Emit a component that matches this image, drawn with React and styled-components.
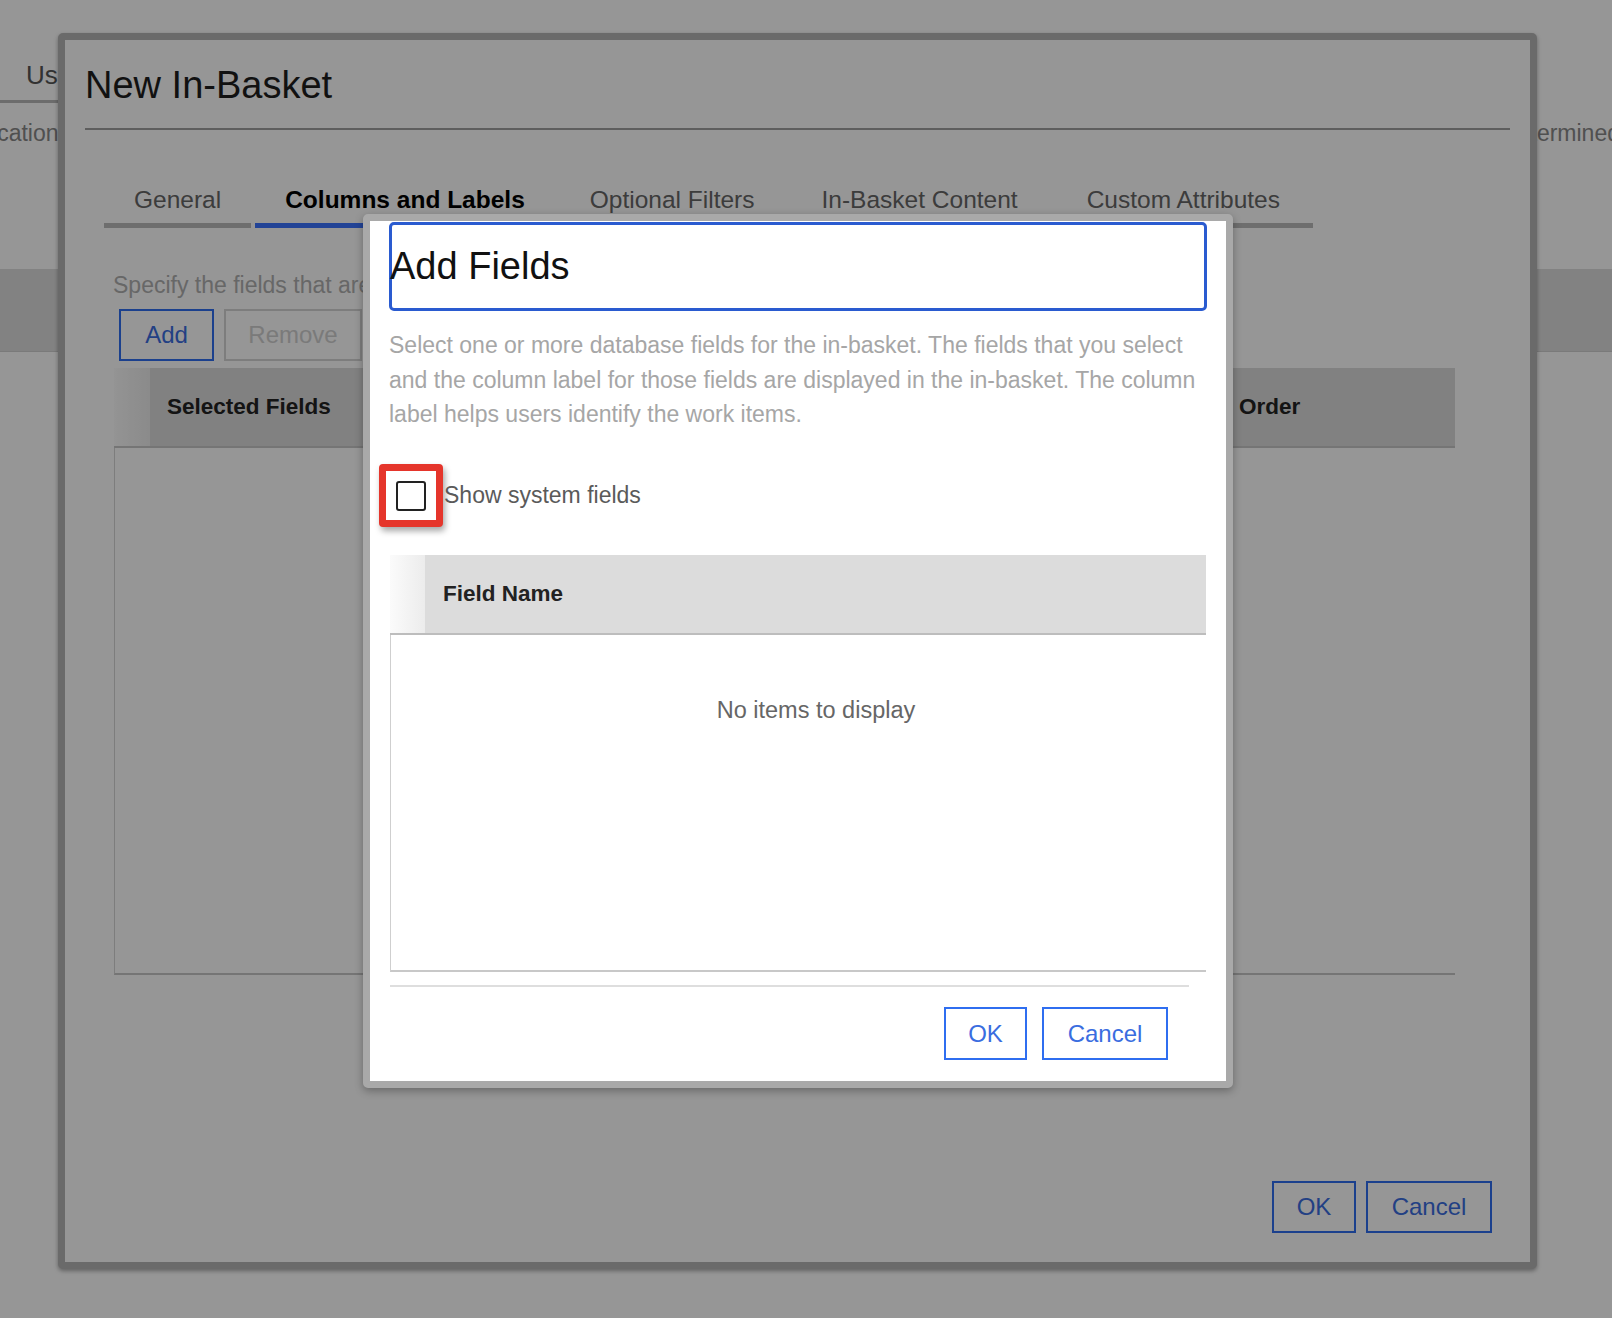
import React from 'react';
import styled, { createGlobalStyle } from 'styled-components';

const GlobalStyle = createGlobalStyle`
  html, body {
    margin: 0;
    padding: 0;
  }
  body {
    font-family: "Liberation Sans", Arial, Helvetica, sans-serif;
    background: #fff;
  }
  * {
    box-sizing: border-box;
  }
`;

const Page = styled.div`
  position: relative;
  width: 1612px;
  height: 1318px;
  overflow: hidden;
  background: #fff;
`;

/* page behind the dialogs */

const Backdrop = styled.div`
  display: flex;
  flex-direction: column;
`;

const BgTabRow = styled.div`
  height: 103px;
  display: flex;
  align-items: flex-end;
`;

const BgTab = styled.span`
  padding: 0 80px 9px 26px;
  border-bottom: 3px solid #b8b8b8;
  font-size: 26px;
  line-height: 32px;
  color: #555;
`;

const BgInfoRow = styled.div`
  height: 166px;
  padding-top: 15px;
  display: flex;
  justify-content: space-between;
  font-size: 23px;
  line-height: 30px;
  color: #888;
  white-space: nowrap;
`;

const BgInfoLeft = styled.span`
  margin-left: -54px;
`;

const BgInfoRight = styled.span`
  margin-right: -8px;
`;

const BgBand = styled.div`
  height: 83px;
  background: #dedede;
  border-bottom: 1px solid #cfcfcf;
`;

/* shared button */

const Button = styled.button`
  width: ${p => p.$w}px;
  height: ${p => p.$h || 52}px;
  padding: 0;
  background: #fff;
  border: 2px solid ${p => (p.$tone === 'muted' ? '#d4d4d4' : '#2f6ef0')};
  color: ${p => (p.$tone === 'muted' ? '#d0d0d0' : '#3a6de0')};
  font-family: inherit;
  font-size: 24px;
  cursor: pointer;
`;

/* New In-Basket dialog */

const OuterDialog = styled.div`
  position: absolute;
  left: 58px;
  top: 33px;
  width: 1479px;
  height: 1236px;
  border: 7px solid #b5b5b5;
  border-radius: 5px;
  background: #fff;
  box-shadow: 0 2px 4px rgba(0, 0, 0, 0.35);
  display: flex;
  flex-direction: column;
`;

const DialogHeader = styled.div`
  margin: 0 20px;
  padding: 22px 0 20px;
  border-bottom: 2px solid #a0a0a0;
`;

const DialogTitle = styled.h1`
  margin: 0;
  font-size: 38px;
  line-height: 46px;
  font-weight: normal;
  color: #1e1e1e;
`;

const TabBar = styled.div`
  display: flex;
  gap: 4px;
  margin: 56px 0 0 39px;
`;

const Tab = styled.div`
  padding: 0 ${p => p.$pad || 31}px 9px;
  font-size: 24.5px;
  line-height: 28px;
  white-space: nowrap;
  color: ${p => (p.$active ? '#000' : '#666')};
  font-weight: ${p => (p.$active ? 'bold' : 'normal')};
  border-bottom: 5px solid ${p => (p.$active ? '#3a72ff' : '#bbbbbb')};
`;

const Intro = styled.p`
  margin: 40px 0 0 48px;
  font-size: 23px;
  line-height: 34px;
  color: #b0b0b0;
  white-space: nowrap;
`;

const ButtonRow = styled.div`
  display: flex;
  gap: 10px;
  margin: 7px 0 0 54px;
`;

const Grid = styled.div`
  margin: 7px 0 0 49px;
  width: 1341px;
`;

const GridHead = styled.div`
  display: flex;
  height: 80px;
  background: #dcdcdc;
  border-bottom: 2px solid #c8c8c8;
`;

const HeadSpacer = styled.div`
  width: ${p => p.$w}px;
  background: linear-gradient(to right, #fbfbfb, #ececec);
`;

const HeadCell = styled.div`
  flex: ${p => (p.$w ? 'none' : 1)};
  width: ${p => (p.$w ? `${p.$w}px` : 'auto')};
  padding-left: ${p => p.$pad || 17}px;
  display: flex;
  align-items: center;
  font-size: 22.5px;
  font-weight: bold;
  color: #222;
`;

const GridBody = styled.div`
  height: 527px;
  border-left: 1px solid #d4d4d4;
  border-bottom: 2px solid #c8c8c8;
`;

const OuterFooter = styled.div`
  margin-top: auto;
  display: flex;
  justify-content: flex-end;
  gap: 10px;
  padding: 0 38px 29px 0;
`;

const Overlay = styled.div`
  position: absolute;
  inset: 0;
  background: rgba(0, 0, 0, 0.41);
`;

/* Add Fields dialog */

const InnerDialog = styled.div`
  position: absolute;
  left: 363px;
  top: 214px;
  width: 870px;
  height: 874px;
  border: 7px solid #a9a9a9;
  border-radius: 5px;
  background: #fff;
  box-shadow: 0 3px 8px rgba(0, 0, 0, 0.3);
  padding: 0 19px;
  display: flex;
  flex-direction: column;
`;

const TitleBox = styled.h2`
  margin: 1px 0 0;
  height: 89px;
  border: 3px solid #2a5bd0;
  border-radius: 5px;
  font-size: 38px;
  line-height: 83px;
  font-weight: normal;
  color: #111;
  text-indent: -2px;
`;

const Description = styled.p`
  margin: 17px 0 0;
  font-size: 23px;
  line-height: 34.5px;
  color: #a6a6a6;
`;

const CheckRow = styled.label`
  display: flex;
  align-items: center;
  margin: 32.5px 0 0 -10px;
`;

const Highlight = styled.span`
  width: 64px;
  height: 63px;
  border: 7px solid #e5352b;
  border-radius: 4px;
  background: #fff;
  box-shadow: 2px 4px 6px rgba(0, 0, 0, 0.35);
  display: flex;
  align-items: center;
  justify-content: center;
`;

const CheckBox = styled.span`
  width: 30px;
  height: 30px;
  border: 2px solid #222;
  border-radius: 3px;
  background: #fff;
`;

const CheckLabel = styled.span`
  margin-left: 1px;
  font-size: 23px;
  color: #5a5a5a;
`;

const FieldGrid = styled.div`
  margin: 28px 1px 0;
`;

const FieldHead = styled.div`
  display: flex;
  height: 80px;
  background: #dcdcdc;
  border-bottom: 2px solid #bdbdbd;
`;

const FieldBody = styled.div`
  height: 337px;
  border-left: 1px solid #cfcfcf;
  border-bottom: 2px solid #c8c8c8;
  padding: 60px 0 0 35px;
  display: flex;
  justify-content: center;
`;

const EmptyText = styled.span`
  font-size: 23.5px;
  line-height: 30px;
  color: #666;
`;

const Divider = styled.div`
  height: 2px;
  margin: 13px 18px 0 1px;
  background: #dedede;
`;

const InnerFooter = styled.div`
  display: flex;
  justify-content: flex-end;
  gap: 15px;
  margin-top: 20px;
  padding-right: 39px;
`;

const tabs = [
  { label: 'General', pad: 30 },
  { label: 'Columns and Labels', pad: 30 },
  { label: 'Optional Filters', pad: 31 },
  { label: 'In-Basket Content', pad: 32 },
  { label: 'Custom Attributes', pad: 33 }
];

const App = () => (
  <Page>
    <GlobalStyle />
    <Backdrop>
      <BgTabRow>
        <BgTab>Users</BgTab>
      </BgTabRow>
      <BgInfoRow>
        <BgInfoLeft>Application</BgInfoLeft>
        <BgInfoRight>determined</BgInfoRight>
      </BgInfoRow>
      <BgBand />
    </Backdrop>

    <OuterDialog>
      <DialogHeader>
        <DialogTitle>New In-Basket</DialogTitle>
      </DialogHeader>
      <TabBar>
        {tabs.map(t => (
          <Tab key={t.label} $pad={t.pad} $active={t.label === 'Columns and Labels'}>
            {t.label}
          </Tab>
        ))}
      </TabBar>
      <Intro>Specify the fields that are displayed in the in-basket.</Intro>
      <ButtonRow>
        <Button $w={95}>Add</Button>
        <Button $w={138} $tone="muted">Remove</Button>
      </ButtonRow>
      <Grid>
        <GridHead>
          <HeadSpacer $w={36} />
          <HeadCell>Selected Fields</HeadCell>
          <HeadCell $w={233}>Order</HeadCell>
        </GridHead>
        <GridBody />
      </Grid>
      <OuterFooter>
        <Button $w={84}>OK</Button>
        <Button $w={126}>Cancel</Button>
      </OuterFooter>
    </OuterDialog>

    <Overlay />

    <InnerDialog>
      <TitleBox>Add Fields</TitleBox>
      <Description>
        Select one or more database fields for the in-basket. The fields that you select
        and the column label for those fields are displayed in the in-basket. The column
        label helps users identify the work items.
      </Description>
      <CheckRow>
        <Highlight>
          <CheckBox />
        </Highlight>
        <CheckLabel>Show system fields</CheckLabel>
      </CheckRow>
      <FieldGrid>
        <FieldHead>
          <HeadSpacer $w={35} />
          <HeadCell $pad={18}>Field Name</HeadCell>
        </FieldHead>
        <FieldBody>
          <EmptyText>No items to display</EmptyText>
        </FieldBody>
      </FieldGrid>
      <Divider />
      <InnerFooter>
        <Button $w={83} $h={53}>OK</Button>
        <Button $w={126} $h={53}>Cancel</Button>
      </InnerFooter>
    </InnerDialog>
  </Page>
);

export default App;
